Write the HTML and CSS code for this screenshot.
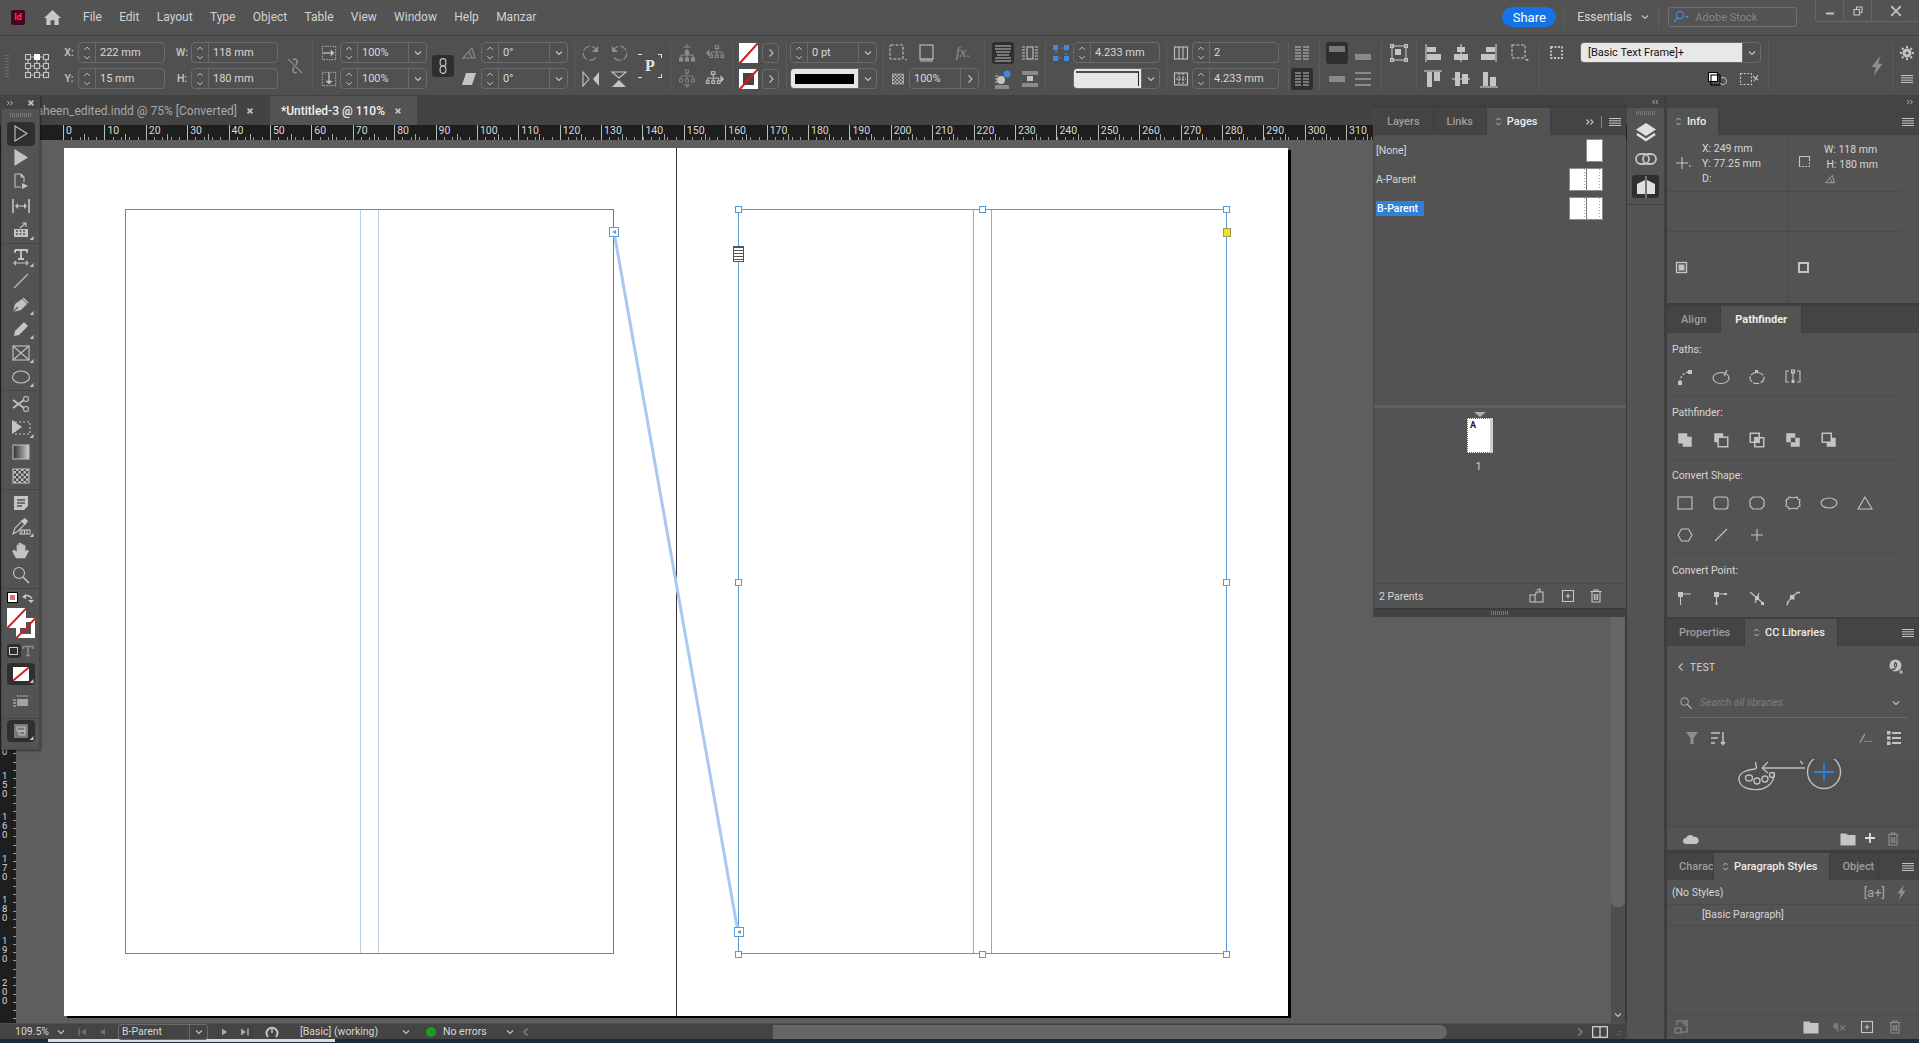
FILE: index.html
```html
<!DOCTYPE html>
<html lang="en">
<head>
    <meta charset="UTF-8">
    <title>Adobe InDesign - Untitled-3</title>
    <link rel="stylesheet" href="styles.css">
</head>
<body>
    <!-- icon sprite -->
    <svg class="sprite" xmlns="http://www.w3.org/2000/svg">
        <defs>
            <linearGradient id="gr"><stop offset="0" stop-color="#2e2e2e"/><stop offset="1" stop-color="#d0d0d0"/></linearGradient>
            <pattern id="chk" width="5" height="5" patternUnits="userSpaceOnUse"><rect width="5" height="5" fill="#bcbcbc"/><rect width="2.500" height="2.500" fill="#444"/><rect x="2.500" y="2.500" width="2.500" height="2.500" fill="#444"/></pattern>
        </defs>
        <symbol id="chev" viewBox="0 0 10 10"><path d="M2 3.500 5 6.500 8 3.500"/></symbol>
        <symbol id="chev-up" viewBox="0 0 10 10"><path d="M2 6.500 5 3.500 8 6.500"/></symbol>
        <symbol id="chev-r" viewBox="0 0 10 10"><path d="M3.500 1.500 7 5 3.500 8.500"/></symbol>
        <symbol id="chev-l" viewBox="0 0 10 10"><path d="M6.500 1.500 3 5 6.500 8.500"/></symbol>
        <symbol id="dbl-r" viewBox="0 0 10 10"><path d="M1.500 2.500 4 5 1.500 7.500M5.500 2.500 8 5 5.500 7.500"/></symbol>
        <symbol id="dbl-l" viewBox="0 0 10 10"><path d="M4.500 2.500 2 5 4.500 7.500M8.500 2.500 6 5 8.500 7.500"/></symbol>
        <symbol id="close" viewBox="0 0 10 10"><path d="M2 2 8 8M8 2 2 8" stroke-width="2"/></symbol>
        <symbol id="menu" viewBox="0 0 14 10"><path d="M1 1.500h12M1 3.800h12M1 6.200h12M1 8.500h12" stroke-width="1"/></symbol>
        <symbol id="sort" viewBox="0 0 8 12"><path d="M1.500 4.500 4 2l2.500 2.500M1.500 7.500 4 10l2.500-2.500"/></symbol>
        <symbol id="trash" viewBox="0 0 14 14"><path d="M1.500 2.500h11M5 2.500V1h4v1.500M3 3v10h8V3M5.300 5v6M7 5v6M8.700 5v6"/></symbol>
        <symbol id="newpage" viewBox="0 0 14 14"><rect x="1.500" y="1.500" width="11" height="11"/><path d="M7 4.500v5M4.500 7h5"/></symbol>
        <symbol id="folder" viewBox="0 0 16 14"><path d="M1 2h5l1.500 1.500H15V13H1z" fill="currentColor"/></symbol>
        <symbol id="bolt" viewBox="0 0 12 18"><path d="M9 0 1 10h4L3 18l8-11H7z" fill="currentColor" stroke="none"/></symbol>

        <symbol id="t-sel" viewBox="0 0 20 20"><path d="M4 2v15l12-7.500z"/></symbol>
        <symbol id="t-dsel" viewBox="0 0 20 20"><path d="M4 2v15l12-7.500z" fill="currentColor"/></symbol>
        <symbol id="t-page" viewBox="0 0 20 20"><path d="M4 2h6l3 3v5M4 2v13h6M13 5h-3V2"/><path d="M11 11v6l6-3z" fill="currentColor" stroke="none"/></symbol>
        <symbol id="t-gap" viewBox="0 0 20 20"><path d="M2 3v14M18 3v14" stroke-width="1.600"/><path d="M5 10h10"/><path d="M4 10l3-3v6zM16 10l-3-3v6z" fill="currentColor" stroke="none"/></symbol>
        <symbol id="t-content" viewBox="0 0 20 20"><path d="M3 9h14v8H3z" fill="currentColor" stroke="none"/><path d="M5 11h2M8.500 11h2M12 11h2M5 14h2M8.500 14h2M12 14h2" stroke="#535353" stroke-width="1.600"/><path d="M9 8l6-5M11 3h4v4"/></symbol>
        <symbol id="t-type" viewBox="0 0 20 20"><path d="M4 3h12v3M4 3v3M10 3v9M7 12h6" stroke-width="1.800"/><path d="M3 16h14M5 14l-2 2 2 2M15 14l2 2-2 2"/></symbol>
        <symbol id="t-line" viewBox="0 0 20 20"><path d="M3 17 17 3"/></symbol>
        <symbol id="t-pen" viewBox="0 0 20 20"><path d="M2 17 4 9l7-5 5 5-6 6z" fill="currentColor" stroke="none"/><path d="M2 17l5-5" stroke="#535353"/><path d="M12 3l5 5" stroke-width="1.500"/></symbol>
        <symbol id="t-pencil" viewBox="0 0 20 20"><path d="M3 17l1-5L13 3l4 4-9 9z" fill="currentColor" stroke="none"/></symbol>
        <symbol id="t-frame" viewBox="0 0 20 20"><rect x="2" y="3" width="16" height="14"/><path d="M2 3l16 14M18 3 2 17"/></symbol>
        <symbol id="t-ellipse" viewBox="0 0 20 20"><ellipse cx="10" cy="10" rx="8.500" ry="6"/></symbol>
        <symbol id="t-scissors" viewBox="0 0 20 20"><circle cx="15" cy="5" r="2.500"/><circle cx="15" cy="15" r="2.500"/><path d="M13 6 2 14M13 14 2 6" stroke-width="1.600"/></symbol>
        <symbol id="t-free" viewBox="0 0 20 20"><rect x="4" y="4" width="15" height="12" stroke-dasharray="2 2"/><path d="M1 2v14l10-7z" fill="currentColor" stroke="none"/></symbol>
        <symbol id="t-grad" viewBox="0 0 20 20"><rect x="2" y="3" width="16" height="14" fill="url(#gr)" stroke="#bbb"/></symbol>
        <symbol id="t-check" viewBox="0 0 20 20"><rect x="2" y="3" width="16" height="14" fill="url(#chk)" stroke="#bbb"/></symbol>
        <symbol id="t-note" viewBox="0 0 20 20"><path d="M3 3h14v10l-4 4H3z" fill="currentColor" stroke="none"/><path d="M6 7h8M6 10h8M6 13h5" stroke="#535353" stroke-width="1.300"/></symbol>
        <symbol id="t-drop" viewBox="0 0 20 20"><path d="M2 17l2-6 7-7 3 3-7 7z"/><path d="M11 3l3-2 3 3-2 3-1 1-4-4z" fill="currentColor" stroke="none"/><rect x="9" y="13" width="10" height="4"/><path d="M11 13v4M13.500 13v4M16 13v4"/></symbol>
        <symbol id="t-hand" viewBox="0 0 20 20"><path d="M5 17 1.500 10l1.500-1L6 11V4h1.500L8 9V2h1.800L10.500 9V3H12l.5 6V4.500h1.600V11l2-2 1.400 1L14 17z" fill="currentColor" stroke="currentColor" stroke-width=".6"/></symbol>
        <symbol id="t-zoom" viewBox="0 0 20 20"><circle cx="8" cy="8" r="5.500"/><path d="M12 12l6 6" stroke-width="1.600"/></symbol>
        <symbol id="swap" viewBox="0 0 14 14"><path d="M3 5a6 6 0 0 1 8 3" stroke-width="1.500"/><path d="M1 6l4-3v5zM10 12l-3-3h6z" fill="currentColor" stroke="none"/></symbol>
        <symbol id="t-t" viewBox="0 0 14 14"><path d="M2 2.500h10v2.500M2 2.500v2.500M7 2.500v9M5 11.500h4" stroke-width="1.500"/></symbol>
        <symbol id="t-screen" viewBox="0 0 20 20"><rect x="3" y="3" width="14" height="14" fill="currentColor" stroke="none" opacity=".5"/><path d="M6 6h8v4H6zM8 10h6v4H8z" stroke-width="1"/></symbol>
        <symbol id="t-format" viewBox="0 0 20 20"><path d="M6 8h11v7H6z" fill="currentColor" stroke="none"/><path d="M2 9h3M2 12h3M2 15h3M7 6V4M10 6V4M13 6V4M16 6V4" stroke-width="1.400"/></symbol>

        <symbol id="c-ref" viewBox="0 0 26 26"><path d="M4 4h18M4 13h18M4 22h18M4 4v18M13 4v18M22 4v18"/><g fill="#505050"><rect x="1.500" y="1.500" width="5" height="5"/><rect x="19.500" y="1.500" width="5" height="5"/><rect x="1.500" y="10.500" width="5" height="5"/><rect x="10.500" y="10.500" width="5" height="5"/><rect x="19.500" y="10.500" width="5" height="5"/><rect x="1.500" y="19.500" width="5" height="5"/><rect x="10.500" y="19.500" width="5" height="5"/><rect x="19.500" y="19.500" width="5" height="5"/></g><rect x="10" y="1" width="6" height="6" fill="#fff" stroke="none"/></symbol>
        <symbol id="c-link" viewBox="0 0 20 20"><path d="M8 4c2-2 5 0 4 3l-1 2M12 16c-2 2-5 0-4-3l1-2" stroke-width="1.600"/><path d="M3 3l14 14"/></symbol>
        <symbol id="c-link2" viewBox="0 0 14 22"><rect x="3.500" y="2" width="7" height="9" rx="3.500" stroke-width="1.400"/><rect x="3.500" y="11" width="7" height="9" rx="3.500" stroke-width="1.400"/></symbol>
        <symbol id="c-sx" viewBox="0 0 18 18"><rect x="1.500" y="1.500" width="15" height="15" stroke-dasharray="1.500 1.500"/><path d="M2 9h11" stroke-width="1.400"/><path d="M15 9l-4-4v8z" fill="currentColor" stroke="none"/></symbol>
        <symbol id="c-sy" viewBox="0 0 18 18"><rect x="1.500" y="1.500" width="15" height="15" stroke-dasharray="1.500 1.500"/><path d="M9 2v11" stroke-width="1.400"/><path d="M9 15l-4-4h8z" fill="currentColor" stroke="none"/></symbol>
        <symbol id="c-angle" viewBox="0 0 16 16"><path d="M2 13h12L11 3z"/><path d="M8 7l3 6"/></symbol>
        <symbol id="c-shear" viewBox="0 0 16 16"><path d="M5 2h10l-4 12H1z" fill="currentColor" stroke="none"/></symbol>
        <symbol id="c-rot" viewBox="0 0 20 20"><path d="M16 9a7 7 0 1 0-1 5" stroke-dasharray="8 2"/><path d="M17 3v6h-6z" fill="currentColor" stroke="none"/></symbol>
        <symbol id="c-rotb" viewBox="0 0 20 20"><path d="M4 9a7 7 0 1 1 1 5" stroke-dasharray="8 2"/><path d="M3 3v6h6z" fill="currentColor" stroke="none"/></symbol>
        <symbol id="c-fliph" viewBox="0 0 20 20"><path d="M2 3l6 7-6 7z"/><path d="M18 3l-6 7 6 7z" fill="currentColor" stroke="none"/></symbol>
        <symbol id="c-flipv" viewBox="0 0 20 20"><path d="M3 3h14l-7 6z"/><path d="M3 18h14l-7-7z" fill="currentColor" stroke="none"/></symbol>
        <symbol id="c-tree" viewBox="0 0 20 20"><path d="M10 1 6 5h8z" fill="currentColor" stroke="none" opacity=".6"/><path d="M10 6v6M4 12h12M4 12v3M10 12v3M16 12v3"/><g fill="currentColor"><rect x="8.500" y="8" width="3" height="3"/><rect x="2.500" y="15" width="3" height="3"/><rect x="8.500" y="15" width="3" height="3"/><rect x="14.500" y="15" width="3" height="3"/></g></symbol>
        <symbol id="c-tree2" viewBox="0 0 22 20"><path d="M1 10l4-4v8z" fill="currentColor" stroke="none"/><path d="M13 4v4M7 9h12M7 9v3M13 9v3M19 9v3"/><g fill="none"><rect x="11" y="2" width="4" height="3"/><rect x="5.500" y="12" width="3" height="3"/><rect x="11.500" y="12" width="3" height="3"/><rect x="17.500" y="12" width="3" height="3"/></g></symbol>
        <symbol id="c-tree3" viewBox="0 0 20 20"><path d="M10 19l-4-4h8z" fill="currentColor" stroke="none" opacity=".6"/><path d="M10 3v4M4 7h12M4 7v3M10 7v3M16 7v3" opacity=".7"/><g fill="none" opacity=".7"><rect x="8.500" y="1" width="3" height="3"/><rect x="2.500" y="10" width="3" height="3"/><rect x="8.500" y="10" width="3" height="3"/><rect x="14.500" y="10" width="3" height="3"/></g></symbol>
        <symbol id="c-tree4" viewBox="0 0 22 20"><path d="M21 10l-4-4v8z" fill="currentColor" stroke="none"/><path d="M9 4v4M3 9h12M3 9v3M9 9v3M15 9v3"/><g fill="none"><rect x="7" y="2" width="4" height="3"/><rect x="1.500" y="12" width="3" height="3"/><rect x="7.500" y="12" width="3" height="3"/><rect x="13.500" y="12" width="3" height="3"/></g></symbol>
        <symbol id="c-fframe" viewBox="0 0 20 20"><rect x="2" y="2" width="13" height="14" rx="1" stroke-dasharray="3 1.500"/><path d="M17 16l2 0-1 1.500z" fill="currentColor" stroke="none"/></symbol>
        <symbol id="c-shadow" viewBox="0 0 20 20"><rect x="3" y="2" width="13" height="14"/><rect x="3" y="16" width="13" height="3" fill="currentColor" stroke="none" opacity=".5"/></symbol>
        <symbol id="c-wrap1" viewBox="0 0 20 20"><path d="M2 3h16M2 6h16M2 15h16M2 18h16M3 9h14M4 12h12" stroke-width="1.100"/></symbol>
        <symbol id="c-wrap2" viewBox="0 0 20 20"><rect x="7" y="4" width="6" height="12"/><path d="M2 4h3M2 7h3M2 10h3M2 13h3M2 16h3M15 4h3M15 7h3M15 10h3M15 13h3M15 16h3"/></symbol>
        <symbol id="c-wrap3" viewBox="0 0 20 20"><ellipse cx="8" cy="11" rx="4" ry="4" fill="currentColor" stroke="none"/><circle cx="14" cy="5" r="3.500" fill="#3f8be0" stroke="none"/><path d="M2 17h14M2 19h14M2 7h3M2 10h2M2 13h2"/></symbol>
        <symbol id="c-wrap4" viewBox="0 0 20 20"><rect x="7" y="7" width="6" height="5" fill="currentColor" stroke="none"/><path d="M2 3h16M2 5h16M2 15h16M2 17h16"/></symbol>
        <symbol id="c-auto" viewBox="0 0 16 16"><path d="M3 3h10v10H3z" stroke="#4a90e2" stroke-dasharray="2 3"/><g fill="#3f8be0" stroke="none"><rect x="0" y="0" width="5" height="5"/><rect x="11" y="0" width="5" height="5"/><rect x="0" y="11" width="5" height="5"/><rect x="11" y="11" width="5" height="5"/></g></symbol>
        <symbol id="c-cols" viewBox="0 0 16 16"><rect x="1.500" y="2" width="13" height="12"/><path d="M6 2v12M10 2v12"/></symbol>
        <symbol id="c-gut" viewBox="0 0 16 16"><rect x="1.500" y="2" width="13" height="12"/><path d="M6 2v12M10 2v12M3 8h10" stroke-dasharray="2 1"/></symbol>
        <symbol id="c-list1" viewBox="0 0 18 16"><path d="M2 2h6M2 5h6M2 8h6M2 11h6M2 14h6M10 2h6M10 5h6M10 8h6M10 11h6M10 14h6" stroke-width="1"/></symbol>
        <symbol id="c-lines" viewBox="0 0 18 16"><path d="M1 2h16M1 4h16M1 6h16" stroke-width="1"/></symbol>
        <symbol id="c-linesb" viewBox="0 0 18 16"><path d="M1 10h16M1 12h16M1 14h16" stroke-width="1"/></symbol>
        <symbol id="c-linesm" viewBox="0 0 18 16"><path d="M1 6h16M1 8h16M1 10h16" stroke-width="1"/></symbol>
        <symbol id="c-liness" viewBox="0 0 18 16"><path d="M1 2h16M1 8h16M1 14h16" stroke-width="1"/></symbol>
        <symbol id="c-fit" viewBox="0 0 20 20"><rect x="3" y="3" width="14" height="14"/><rect x="1.500" y="1.500" width="3" height="3"/><rect x="15.500" y="1.500" width="3" height="3"/><rect x="1.500" y="15.500" width="3" height="3"/><rect x="15.500" y="15.500" width="3" height="3"/><rect x="6" y="6" width="6" height="6" fill="currentColor" stroke="none"/></symbol>
        <symbol id="a-l" viewBox="0 0 18 20"><path d="M2 1v18" stroke-width="1.200"/><rect x="3" y="4" width="9" height="5" fill="currentColor" stroke="none"/><rect x="3" y="11" width="14" height="6" fill="currentColor" stroke="none"/></symbol>
        <symbol id="a-c" viewBox="0 0 18 20"><path d="M9 1v18" stroke-width="1.200"/><rect x="5" y="4" width="8" height="5" fill="currentColor" stroke="none"/><rect x="2" y="11" width="14" height="6" fill="currentColor" stroke="none"/></symbol>
        <symbol id="a-r" viewBox="0 0 18 20"><path d="M16 1v18" stroke-width="1.200"/><rect x="6" y="4" width="9" height="5" fill="currentColor" stroke="none"/><rect x="1" y="11" width="14" height="6" fill="currentColor" stroke="none"/></symbol>
        <symbol id="a-t" viewBox="0 0 20 20"><path d="M1 2h18" stroke-width="1.200"/><rect x="4" y="3" width="5" height="15" fill="currentColor" stroke="none"/><rect x="11" y="3" width="6" height="9" fill="currentColor" stroke="none"/></symbol>
        <symbol id="a-m" viewBox="0 0 20 20"><path d="M1 10h18" stroke-width="1.200"/><rect x="4" y="3" width="5" height="14" fill="currentColor" stroke="none"/><rect x="11" y="5" width="6" height="10" fill="currentColor" stroke="none"/></symbol>
        <symbol id="a-b" viewBox="0 0 20 20"><path d="M1 18h18" stroke-width="1.200"/><rect x="4" y="3" width="5" height="14" fill="currentColor" stroke="none"/><rect x="11" y="8" width="6" height="9" fill="currentColor" stroke="none"/></symbol>
        <symbol id="a-box" viewBox="0 0 20 20"><rect x="2" y="2" width="13" height="13" stroke-dasharray="3 1.500"/><path d="M15 16h4l-2 2z" fill="currentColor" stroke="none"/></symbol>
        <symbol id="c-grid" viewBox="0 0 16 16"><rect x="2" y="2" width="11" height="11" stroke-dasharray="2 1.500" stroke-width="1.800"/></symbol>
        <symbol id="c-styled" viewBox="0 0 20 16"><rect x="1.500" y="1.500" width="9" height="9" fill="#fff" stroke="#000"/><rect x="4" y="4" width="9" height="10" fill="none" stroke="#000"/><path d="M14 7a3.500 3.500 0 1 1-1 5" stroke="#aaa"/></symbol>
        <symbol id="c-clear" viewBox="0 0 20 16"><rect x="1.500" y="2.500" width="11" height="11" stroke-dasharray="2 1.500"/><path d="M15 10l4-6M14 5l5 4" stroke-width="1.100"/></symbol>
        <symbol id="dock-layers" viewBox="0 0 24 24"><path d="M12 3 22 9.500 12 16 2 9.500z" fill="currentColor" stroke="none"/><path d="M3 14l9 6 9-6" stroke-width="2.600"/></symbol>
        <symbol id="dock-links" viewBox="0 0 24 24"><rect x="2" y="7" width="13" height="10" rx="5" stroke-width="1.800"/><rect x="9" y="7" width="13" height="10" rx="5" stroke-width="1.800"/></symbol>
        <symbol id="dock-pages" viewBox="0 0 24 24"><path d="M11 5 3 9v10h8zM13 5l8 4v10h-8z" fill="currentColor" stroke="none"/><path d="M12 1v22" stroke-width=".8"/></symbol>
        <symbol id="i-cross" viewBox="0 0 16 16"><path d="M1 8h12M7 2v12"/><path d="M14 11h1.500" stroke-width="1.500"/></symbol>
        <symbol id="i-box" viewBox="0 0 16 16"><rect x="2.500" y="1.500" width="10" height="10" stroke-dasharray="2 1.200"/><path d="M2.500 1.500h10v3M2.500 1.500v10"/></symbol>
        <symbol id="i-fill" viewBox="0 0 14 14"><rect x="1.500" y="1.500" width="10" height="10" stroke-width="1.400"/><rect x="3.500" y="3.500" width="6" height="6" fill="currentColor" stroke="none"/></symbol>
        <symbol id="i-stroke" viewBox="0 0 14 14"><rect x="2" y="2" width="9" height="9" stroke-width="2"/></symbol>
        <symbol id="p-join" viewBox="0 0 18 18"><path d="M4 14C4 9 7 5 12 4" stroke-dasharray="2 2" stroke-width="1.400"/><rect x="2" y="13" width="4" height="4" fill="currentColor" stroke="none"/><rect x="12" y="2" width="4" height="4" fill="currentColor" stroke="none"/></symbol>
        <symbol id="p-open" viewBox="0 0 18 18"><ellipse cx="9" cy="10" rx="8" ry="5.500"/><path d="M12 8l3-6"/></symbol>
        <symbol id="p-close" viewBox="0 0 18 18"><ellipse cx="9" cy="10" rx="7" ry="5.500" stroke-dasharray="6 1.500"/><rect x="7" y="2" width="3" height="3" fill="currentColor" stroke="none"/></symbol>
        <symbol id="p-rev" viewBox="0 0 18 18"><path d="M5 3H2v11h3M13 3h3v11h-3M9 3v12"/><rect x="7.500" y="12" width="3" height="3" fill="currentColor" stroke="none"/><rect x="7.500" y="2" width="3" height="3"/></symbol>
        <symbol id="f-add" viewBox="0 0 16 16"><path d="M2 2h8v3h4v9H6v-3H2z" fill="currentColor" stroke="none"/></symbol>
        <symbol id="f-sub" viewBox="0 0 16 16"><rect x="2" y="2" width="8" height="8" fill="currentColor" stroke="none"/><rect x="5.500" y="5.500" width="8.500" height="8.500" fill="#535353" stroke-width="1.300"/></symbol>
        <symbol id="f-int" viewBox="0 0 16 16"><rect x="2" y="2" width="8" height="8" stroke-width="1.300"/><rect x="6" y="6" width="8" height="8" stroke-width="1.300"/><rect x="6" y="6" width="4" height="4" fill="currentColor" stroke="none"/></symbol>
        <symbol id="f-exc" viewBox="0 0 16 16"><rect x="2" y="2" width="8" height="8" fill="currentColor" stroke="none"/><rect x="6" y="6" width="8" height="8" fill="currentColor" stroke="none"/><rect x="6" y="6" width="4" height="4" fill="#535353" stroke="none"/></symbol>
        <symbol id="f-back" viewBox="0 0 16 16"><rect x="6" y="6" width="8" height="8" fill="currentColor" stroke="none"/><rect x="2" y="2" width="8" height="8" fill="#535353" stroke-width="1.300"/></symbol>
        <symbol id="s-rect" viewBox="0 0 18 18"><rect x="2" y="3" width="14" height="12"/></symbol>
        <symbol id="s-round" viewBox="0 0 18 18"><rect x="2" y="3" width="14" height="12" rx="3"/></symbol>
        <symbol id="s-bevel" viewBox="0 0 18 18"><path d="M5 3h8l3 3v6l-3 3H5l-3-3V6z"/></symbol>
        <symbol id="s-inv" viewBox="0 0 18 18"><path d="M5 3q4 1.500 8 0 0 2 3 3-1 3 0 6-3 1-3 3-4-1.500-8 0 0-2-3-3 1-3 0-6 3-1 3-3z"/></symbol>
        <symbol id="s-ell" viewBox="0 0 18 18"><ellipse cx="9" cy="9" rx="8" ry="5"/></symbol>
        <symbol id="s-tri" viewBox="0 0 18 18"><path d="M9 3l7 12H2z"/></symbol>
        <symbol id="s-hex" viewBox="0 0 18 18"><path d="M5.500 3h7L16 9l-3.500 6h-7L2 9z"/></symbol>
        <symbol id="s-line" viewBox="0 0 18 18"><path d="M3 15 15 3"/></symbol>
        <symbol id="s-plus" viewBox="0 0 18 18"><path d="M9 3v12M3 9h12"/></symbol>
        <symbol id="pt-a" viewBox="0 0 18 18"><rect x="2" y="3" width="5" height="5" fill="currentColor" stroke="none"/><path d="M7 5h8M4.500 8v8"/></symbol>
        <symbol id="pt-b" viewBox="0 0 18 18"><rect x="2" y="3" width="5" height="5" fill="currentColor" stroke="none"/><path d="M7 5h8M4.500 8v8"/><rect x="12" y="4" width="3" height="2" fill="currentColor" stroke="none"/><rect x="3.500" y="13" width="2" height="3" fill="currentColor" stroke="none"/></symbol>
        <symbol id="pt-c" viewBox="0 0 18 18"><path d="M2 3l14 12M11 4 7 14"/><rect x="7" y="7" width="4" height="4" fill="currentColor" stroke="none"/><rect x="13" y="13" width="3" height="3" fill="currentColor" stroke="none"/></symbol>
        <symbol id="pt-d" viewBox="0 0 18 18"><path d="M3 16C5 10 10 5 16 3"/><rect x="6" y="6" width="4.500" height="4.500" fill="currentColor" stroke="none"/><path d="M12 3l4 1M4 12l-1 4"/></symbol>
    </svg>

    <header class="menubar">
        <div class="app-logo">Id</div>
        <svg class="home" viewBox="0 0 20 18"><path d="M10 1 1 9.500h2.500V17H8v-5h4v5h4.500V9.500H19z"/></svg>
        <nav class="menu">
            <span>File</span><span>Edit</span><span>Layout</span><span>Type</span><span>Object</span>
            <span>Table</span><span>View</span><span>Window</span><span>Help</span><span>Manzar</span>
        </nav>
        <button class="share">Share</button>
        <i class="vsep"></i>
        <div class="workspace-name">Essentials <svg class="ic s10"><use href="#chev"/></svg></div>
        <i class="vsep"></i>
        <div class="stock">
            <svg class="stock-ic" viewBox="0 0 18 14"><circle cx="8" cy="5" r="3.600"/><path d="M5.500 8 2 12"/><path d="M13 6h4l-2 2.500z" fill="#3f8be0" stroke="none"/></svg>
            <span>Adobe Stock</span>
        </div>
        <div class="winctl">
            <span><svg class="ic s10" viewBox="0 0 10 10"><path d="M1 7.500h8" stroke-width="2"/></svg></span>
            <span><svg class="ic s10" viewBox="0 0 10 10"><rect x="1" y="3.500" width="5.500" height="5.500"/><path d="M3.500 3.500V1H9v5.500H6.500"/></svg></span>
            <span><svg class="ic s12" viewBox="0 0 10 10"><path d="M1 1l8 8M9 1 1 9" stroke-width="1.400"/></svg></span>
        </div>
    </header>

    <div class="controlbar">
        <!-- first row -->
        <i class="grip-v span2"></i>
        <svg class="ic s26 span2"><use href="#c-ref"/></svg>
        <label>X:</label>
        <div class="field"><span class="spin"><svg class="ic s8"><use href="#chev-up"/></svg><svg class="ic s8"><use href="#chev"/></svg></span><span class="val">222 mm</span></div>
        <label>W:</label>
        <div class="field"><span class="spin"><svg class="ic s8"><use href="#chev-up"/></svg><svg class="ic s8"><use href="#chev"/></svg></span><span class="val">118 mm</span></div>
        <svg class="ic s20 span2 dim"><use href="#c-link"/></svg>
        <i class="sep span2"></i>
        <svg class="ic s16"><use href="#c-sx"/></svg>
        <div class="field"><span class="spin"><svg class="ic s8"><use href="#chev-up"/></svg><svg class="ic s8"><use href="#chev"/></svg></span><span class="val">100%</span><span class="drop"><svg class="ic s10"><use href="#chev"/></svg></span></div>
        <span class="dark-btn span2"><svg class="ic h18"><use href="#c-link2"/></svg></span>
        <svg class="ic s16 dim"><use href="#c-angle"/></svg>
        <div class="field"><span class="spin"><svg class="ic s8"><use href="#chev-up"/></svg><svg class="ic s8"><use href="#chev"/></svg></span><span class="val">0°</span><span class="drop"><svg class="ic s10"><use href="#chev"/></svg></span></div>
        <i class="sep span2"></i>
        <svg class="ic s20 dim"><use href="#c-rot"/></svg>
        <svg class="ic s20 dim"><use href="#c-rotb"/></svg>
        <div class="p-box span2">P</div>
        <i class="sep span2"></i>
        <svg class="ic s20 dim"><use href="#c-tree"/></svg>
        <svg class="ic s20 dim"><use href="#c-tree2"/></svg>
        <i class="sep span2"></i>
        <span class="swatch none"></span>
        <span class="arrow-btn"><svg class="ic s10"><use href="#chev-r"/></svg></span>
        <i class="sep span2"></i>
        <div class="field"><span class="spin"><svg class="ic s8"><use href="#chev-up"/></svg><svg class="ic s8"><use href="#chev"/></svg></span><span class="val">0 pt</span><span class="drop"><svg class="ic s10"><use href="#chev"/></svg></span></div>
        <i class="sep span2"></i>
        <svg class="ic s20"><use href="#c-fframe"/></svg>
        <svg class="ic s20"><use href="#c-shadow"/></svg>
        <span class="fx">fx.</span>
        <i class="sep span2"></i>
        <span class="dark-btn"><svg class="ic s20"><use href="#c-wrap1"/></svg></span>
        <svg class="ic s20"><use href="#c-wrap2"/></svg>
        <i class="sep span2"></i>
        <svg class="ic s16"><use href="#c-auto"/></svg>
        <div class="field"><span class="spin"><svg class="ic s8"><use href="#chev-up"/></svg><svg class="ic s8"><use href="#chev"/></svg></span><span class="val">4.233 mm</span></div>
        <i class="sep span2"></i>
        <svg class="ic s16"><use href="#c-cols"/></svg>
        <div class="field"><span class="spin"><svg class="ic s8"><use href="#chev-up"/></svg><svg class="ic s8"><use href="#chev"/></svg></span><span class="val">2</span></div>
        <i class="sep span2"></i>
        <svg class="ic s18"><use href="#c-list1"/></svg>
        <i class="sep span2"></i>
        <span class="dark-btn"><svg class="ic s18"><use href="#c-lines"/></svg></span>
        <svg class="ic s18"><use href="#c-linesb"/></svg>
        <i class="sep span2"></i>
        <svg class="ic s20"><use href="#c-fit"/></svg>
        <i class="sep span2"></i>
        <svg class="ic s20"><use href="#a-l"/></svg>
        <svg class="ic s20"><use href="#a-c"/></svg>
        <svg class="ic s20"><use href="#a-r"/></svg>
        <svg class="ic s20"><use href="#a-box"/></svg>
        <i class="sep span2"></i>
        <svg class="ic s16"><use href="#c-grid"/></svg>
        <div class="field style-field"><span class="white-val">[Basic Text Frame]+</span><span class="drop"><svg class="ic s10"><use href="#chev"/></svg></span></div>
        <i class="sep span2"></i>
        <svg class="ic bolt-ic span2 dim"><use href="#bolt"/></svg>
        <i class="sep span2"></i>
        <svg class="ic s14" viewBox="0 0 14 14"><circle cx="7" cy="7" r="3" stroke-width="3"/><path d="M7 0v2M7 12v2M0 7h2M12 7h2M2 2l1.500 1.500M10.500 10.500 12 12M2 12l1.500-1.500M10.500 3.500 12 2" stroke-width="2"/></svg>

        <!-- second row -->
        <label>Y:</label>
        <div class="field"><span class="spin"><svg class="ic s8"><use href="#chev-up"/></svg><svg class="ic s8"><use href="#chev"/></svg></span><span class="val">15 mm</span></div>
        <label>H:</label>
        <div class="field"><span class="spin"><svg class="ic s8"><use href="#chev-up"/></svg><svg class="ic s8"><use href="#chev"/></svg></span><span class="val">180 mm</span></div>
        <svg class="ic s16"><use href="#c-sy"/></svg>
        <div class="field"><span class="spin"><svg class="ic s8"><use href="#chev-up"/></svg><svg class="ic s8"><use href="#chev"/></svg></span><span class="val">100%</span><span class="drop"><svg class="ic s10"><use href="#chev"/></svg></span></div>
        <svg class="ic s16"><use href="#c-shear"/></svg>
        <div class="field"><span class="spin"><svg class="ic s8"><use href="#chev-up"/></svg><svg class="ic s8"><use href="#chev"/></svg></span><span class="val">0°</span><span class="drop"><svg class="ic s10"><use href="#chev"/></svg></span></div>
        <svg class="ic s20"><use href="#c-fliph"/></svg>
        <svg class="ic s20"><use href="#c-flipv"/></svg>
        <svg class="ic s20 dim"><use href="#c-tree3"/></svg>
        <svg class="ic s20"><use href="#c-tree4"/></svg>
        <span class="swatch stroke"></span>
        <span class="arrow-btn"><svg class="ic s10"><use href="#chev-r"/></svg></span>
        <div class="field"><span class="stroke-preview"><i></i></span><span class="drop"><svg class="ic s10"><use href="#chev"/></svg></span></div>
        <svg class="ic s14"><use href="#t-check"/></svg>
        <div class="field opacity-field span-col2"><span class="val">100%</span><span class="drop"><svg class="ic s10"><use href="#chev-r"/></svg></span></div>
        <svg class="ic s20"><use href="#c-wrap3"/></svg>
        <svg class="ic s20"><use href="#c-wrap4"/></svg>
        <i></i>
        <div class="field"><span class="frame-preview"><i></i></span><span class="drop"><svg class="ic s10"><use href="#chev"/></svg></span></div>
        <svg class="ic s16"><use href="#c-gut"/></svg>
        <div class="field"><span class="spin"><svg class="ic s8"><use href="#chev-up"/></svg><svg class="ic s8"><use href="#chev"/></svg></span><span class="val">4.233 mm</span></div>
        <span class="dark-btn"><svg class="ic s18"><use href="#c-list1"/></svg></span>
        <svg class="ic s18"><use href="#c-linesm"/></svg>
        <svg class="ic s18"><use href="#c-liness"/></svg>
        <i></i>
        <svg class="ic s20"><use href="#a-t"/></svg>
        <svg class="ic s20"><use href="#a-m"/></svg>
        <svg class="ic s20"><use href="#a-b"/></svg>
        <i></i>
        <i></i>
        <div class="style-actions"><svg class="ic w20"><use href="#c-styled"/></svg><svg class="ic w20"><use href="#c-clear"/></svg></div>
        <svg class="ic s14"><use href="#menu"/></svg>
    </div>

    <div class="workspace">
        <div class="doc">
            <div class="doc-tabs">
                <div class="doc-tab"><span>Shaheen_edited.indd @ 75% [Converted]</span><svg class="ic s8"><use href="#close"/></svg></div>
                <div class="doc-tab active"><span>*Untitled-3 @ 110%</span><svg class="ic s8"><use href="#close"/></svg></div>
            </div>
            <div class="ruler-h">
                <span>0</span><span>10</span><span>20</span><span>30</span><span>40</span><span>50</span><span>60</span><span>70</span>
                <span>80</span><span>90</span><span>100</span><span>110</span><span>120</span><span>130</span><span>140</span><span>150</span>
                <span>160</span><span>170</span><span>180</span><span>190</span><span>200</span><span>210</span><span>220</span><span>230</span>
                <span>240</span><span>250</span><span>260</span><span>270</span><span>280</span><span>290</span><span>300</span><span>310</span>
            </div>
            <div class="doc-body">
                <div class="ruler-v">
                    <span>0</span><span>10</span><span>20</span><span>30</span><span>40</span><span>50</span><span>60</span><span>70</span>
                    <span>80</span><span>90</span><span>100</span><span>110</span><span>120</span><span>130</span><span>140</span><span>150</span>
                    <span>160</span><span>170</span><span>180</span><span>190</span><span>200</span>
                </div>
                <div class="canvas">
                    <div class="sheet">
                        <i class="spine"></i>
                        <div class="parent-box"><i class="guide g1"></i><i class="guide g2"></i></div>
                        <div class="text-frame"><i class="guide g1"></i><i class="guide g2"></i></div>
                        <svg class="thread" viewBox="0 0 1224 868"><path d="M550 84 674 784"/></svg>
                        <i class="port out"></i>
                        <i class="h tl"></i><i class="h tc"></i><i class="h tr"></i>
                        <i class="h ml"></i><i class="h mr"></i>
                        <i class="h bl"></i><i class="h bc"></i><i class="h br"></i>
                        <i class="port in"></i>
                        <i class="port yellow"></i>
                        <i class="load-cursor"></i>
                    </div>
                </div>
                <div class="vscroll">
                    <div class="vthumb"></div>
                    <svg class="ic s10"><use href="#chev"/></svg>
                </div>
            </div>
            <div class="statusbar">
                <span class="zoom">109.5%</span><svg class="ic s10"><use href="#chev"/></svg>
                <svg class="ic s10 nav" viewBox="0 0 10 10"><path d="M2 1.500v7" stroke-width="1.500"/><path d="M9 1.500v7L4 5z" fill="currentColor" stroke="none"/></svg>
                <svg class="ic s10 nav" viewBox="0 0 10 10"><path d="M7 1.500v7L2 5z" fill="currentColor" stroke="none"/></svg>
                <div class="page-select"><span>B-Parent</span><span class="drop"><svg class="ic s10"><use href="#chev"/></svg></span></div>
                <svg class="ic s10 nav2" viewBox="0 0 10 10"><path d="M3 1.500v7L8 5z" fill="currentColor" stroke="none"/></svg>
                <svg class="ic s10 nav2" viewBox="0 0 10 10"><path d="M8 1.500v7" stroke-width="1.500"/><path d="M1 1.500v7L6 5z" fill="currentColor" stroke="none"/></svg>
                <svg class="ic s14 timer" viewBox="0 0 14 14"><path d="M3 12A5.500 5.500 0 1 1 11 12" stroke-width="2"/><path d="M7 3v5" stroke-width="1.500"/></svg>
                <span class="preflight">[Basic] (working)</span><svg class="ic s10"><use href="#chev"/></svg>
                <i class="green-dot"></i>
                <span class="errors">No errors</span><svg class="ic s10"><use href="#chev"/></svg>
                <svg class="ic s10 dim"><use href="#chev-l"/></svg>
                <div class="hscroll"><div class="hthumb"></div></div>
                <svg class="ic s10 dim"><use href="#chev-r"/></svg>
                <svg class="ic split" viewBox="0 0 16 12"><rect x=".7" y=".7" width="14.600" height="10.600" stroke-width="1.300"/><path d="M8 1v10" stroke-width="1.300"/></svg>
                <i class="resizer"></i>
            </div>

            <!-- floating tool panel -->
            <aside class="tools">
                <div class="tools-head"><svg class="ic s8"><use href="#dbl-r"/></svg><svg class="ic s8"><use href="#close"/></svg></div>
                <i class="tools-grip"></i>
                <span class="tool on"><svg class="ic s20"><use href="#t-sel"/></svg></span>
                <span class="tool"><svg class="ic s20"><use href="#t-dsel"/></svg></span>
                <span class="tool"><svg class="ic s20"><use href="#t-page"/></svg></span>
                <span class="tool"><svg class="ic s20"><use href="#t-gap"/></svg></span>
                <span class="tool more"><svg class="ic s20"><use href="#t-content"/></svg></span>
                <i class="tool-sep"></i>
                <span class="tool more"><svg class="ic s20"><use href="#t-type"/></svg></span>
                <span class="tool"><svg class="ic s20"><use href="#t-line"/></svg></span>
                <span class="tool more"><svg class="ic s20"><use href="#t-pen"/></svg></span>
                <span class="tool more"><svg class="ic s20"><use href="#t-pencil"/></svg></span>
                <span class="tool more"><svg class="ic s20"><use href="#t-frame"/></svg></span>
                <span class="tool more"><svg class="ic s20"><use href="#t-ellipse"/></svg></span>
                <i class="tool-sep"></i>
                <span class="tool"><svg class="ic s20"><use href="#t-scissors"/></svg></span>
                <span class="tool more"><svg class="ic s20"><use href="#t-free"/></svg></span>
                <span class="tool"><svg class="ic s20"><use href="#t-grad"/></svg></span>
                <span class="tool"><svg class="ic s20"><use href="#t-check"/></svg></span>
                <i class="tool-sep"></i>
                <span class="tool"><svg class="ic s20"><use href="#t-note"/></svg></span>
                <span class="tool more"><svg class="ic s20"><use href="#t-drop"/></svg></span>
                <span class="tool"><svg class="ic s20"><use href="#t-hand"/></svg></span>
                <span class="tool"><svg class="ic s20"><use href="#t-zoom"/></svg></span>
                <i class="tool-sep"></i>
                <div class="mini-swatch"><i class="ms-a"></i><svg class="ic s14"><use href="#swap"/></svg></div>
                <div class="fillstroke"><i class="fs-stroke"></i><i class="fs-fill"></i></div>
                <div class="apply-to"><span class="on"><i></i></span><svg class="ic s14 dim"><use href="#t-t"/></svg></div>
                <span class="tool on more apply"><i class="apply-none"></i></span>
                <span class="tool dimmed"><svg class="ic s20"><use href="#t-format"/></svg></span>
                <i class="tool-sep"></i>
                <span class="tool on more last"><svg class="ic s20"><use href="#t-screen"/></svg></span>
            </aside>

            <!-- pages panel lies over the canvas -->
            <aside class="pages-panel">
                <div class="tabs">
                    <div class="tab">Layers</div>
                    <div class="tab">Links</div>
                    <div class="tab active"><svg class="ic sort"><use href="#sort"/></svg>Pages</div>
                    <div class="tabs-end"><svg class="ic s10"><use href="#dbl-r"/></svg><i class="mini-sep"></i><svg class="ic menu-ic"><use href="#menu"/></svg></div>
                </div>
                <div class="parents">
                    <div class="parent-row"><span>[None]</span><i class="thumb"></i></div>
                    <div class="parent-row"><span>A-Parent</span><i class="thumb double"></i></div>
                    <div class="parent-row"><span class="picked">B-Parent</span><i class="thumb double"></i></div>
                </div>
                <div class="pages-list">
                    <div class="spread">
                        <i class="tri"></i>
                        <div class="page-thumb">A</div>
                        <span>1</span>
                    </div>
                </div>
                <div class="panel-foot">
                    <span>2 Parents</span>
                    <svg class="ic s18 edit" viewBox="0 0 18 18"><path d="M1 8h5l1-1V5h7v10H1zM6 15V8M8 3l3-1v3"/></svg>
                    <svg class="ic s14"><use href="#newpage"/></svg>
                    <svg class="ic s14"><use href="#trash"/></svg>
                </div>
                <i class="panel-grip"></i>
            </aside>
        </div>

        <div class="dock">
            <div class="dock-head"><svg class="ic s8"><use href="#dbl-l"/></svg></div>
            <div class="dock-icons">
                <i class="dock-grip"></i>
                <span class="dock-btn"><svg class="ic s22 light"><use href="#dock-layers"/></svg></span>
                <span class="dock-btn"><svg class="ic s22"><use href="#dock-links"/></svg></span>
                <span class="dock-btn on"><svg class="ic s22 light"><use href="#dock-pages"/></svg></span>
            </div>
        </div>

        <div class="panels">
            <div class="panels-head"><svg class="ic s8"><use href="#dbl-r"/></svg></div>

            <section class="panel info">
                <div class="tabs">
                    <div class="tab active"><svg class="ic sort"><use href="#sort"/></svg>Info</div>
                    <div class="tabs-end"><svg class="ic menu-ic"><use href="#menu"/></svg></div>
                </div>
                <div class="info-grid">
                    <div class="info-cell">
                        <svg class="ic s16 info-ic"><use href="#i-cross"/></svg>
                        <div class="info-lines"><div>X: 249 mm</div><div>Y: 77.25 mm</div><div>D:</div></div>
                    </div>
                    <div class="info-cell right">
                        <svg class="ic s16 info-ic"><use href="#i-box"/></svg>
                        <div class="info-lines"><div>W: 118 mm</div><div>&nbsp;H: 180 mm</div><div><svg class="ic s12"><use href="#c-angle"/></svg></div></div>
                    </div>
                    <div class="info-cell empty"></div>
                    <div class="info-cell empty right"></div>
                    <div class="info-cell swatches"><svg class="ic s14"><use href="#i-fill"/></svg></div>
                    <div class="info-cell swatches right"><svg class="ic s14"><use href="#i-stroke"/></svg></div>
                </div>
            </section>

            <section class="panel pathfinder">
                <div class="tabs">
                    <div class="tab">Align</div>
                    <div class="tab active wide">Pathfinder</div>
                </div>
                <div class="pf-group">
                    <h4>Paths:</h4>
                    <div class="pf-row"><svg class="ic s18"><use href="#p-join"/></svg><svg class="ic s18"><use href="#p-open"/></svg><svg class="ic s18"><use href="#p-close"/></svg><svg class="ic s18"><use href="#p-rev"/></svg></div>
                </div>
                <div class="pf-group">
                    <h4>Pathfinder:</h4>
                    <div class="pf-row"><svg class="ic s18"><use href="#f-add"/></svg><svg class="ic s18"><use href="#f-sub"/></svg><svg class="ic s18"><use href="#f-int"/></svg><svg class="ic s18"><use href="#f-exc"/></svg><svg class="ic s18"><use href="#f-back"/></svg></div>
                </div>
                <div class="pf-group">
                    <h4>Convert Shape:</h4>
                    <div class="pf-row"><svg class="ic s18"><use href="#s-rect"/></svg><svg class="ic s18"><use href="#s-round"/></svg><svg class="ic s18"><use href="#s-bevel"/></svg><svg class="ic s18"><use href="#s-inv"/></svg><svg class="ic s18"><use href="#s-ell"/></svg><svg class="ic s18"><use href="#s-tri"/></svg></div>
                    <div class="pf-row"><svg class="ic s18"><use href="#s-hex"/></svg><svg class="ic s18"><use href="#s-line"/></svg><svg class="ic s18"><use href="#s-plus"/></svg></div>
                </div>
                <div class="pf-group last">
                    <h4>Convert Point:</h4>
                    <div class="pf-row"><svg class="ic s18"><use href="#pt-a"/></svg><svg class="ic s18"><use href="#pt-b"/></svg><svg class="ic s18"><use href="#pt-c"/></svg><svg class="ic s18"><use href="#pt-d"/></svg></div>
                </div>
            </section>

            <section class="panel libraries">
                <div class="tabs">
                    <div class="tab">Properties</div>
                    <div class="tab active"><svg class="ic sort"><use href="#sort"/></svg>CC Libraries</div>
                    <div class="tabs-end"><svg class="ic menu-ic"><use href="#menu"/></svg></div>
                </div>
                <div class="lib-top">
                    <div class="lib-title"><svg class="ic s10"><use href="#chev-l"/></svg><span>TEST</span>
                        <svg class="ic s16 user" viewBox="0 0 16 16"><circle cx="7.500" cy="6.500" r="6" fill="currentColor" stroke="none"/><path d="M7.500 3.500a2.500 3 0 0 1 0 5 2.500 3 0 0 1 0-5zM2 12c1-1.500 3-2 5.500-2" stroke="#535353" stroke-width="1.300"/><path d="M13 11v4M11 13h4" stroke-width="1.200"/></svg>
                    </div>
                    <div class="lib-search"><svg class="ic s14"><use href="#t-zoom"/></svg><em>Search all libraries</em><svg class="ic s10"><use href="#chev"/></svg></div>
                    <div class="lib-tools">
                        <svg class="ic s14 funnel" viewBox="0 0 14 14"><path d="M1 1h12L8.500 7v6h-3V7z" fill="currentColor" stroke="none"/></svg>
                        <svg class="ic s16" viewBox="0 0 16 16"><path d="M1 3h9M1 8h7M1 13h4M13 2v12M11 12l2 2.500 2-2.500" stroke-width="1.500"/></svg>
                        <span class="lib-path">/...</span>
                        <svg class="ic s16" viewBox="0 0 16 16"><path d="M6 3h9M6 8h9M6 13h9" stroke-width="1.800"/><path d="M1 1h3.500v3.500H1zM1 6.300h3.500v3.500H1zM1 11.500h3.500V15H1z" fill="currentColor" stroke="none"/></svg>
                    </div>
                </div>
                <div class="lib-body">
                    <svg class="lib-art" viewBox="0 0 104 34">
                        <path d="M18 3c-2 3 3 5-1 7C8 11 0 14 1 21c1 8 12 11 23 9 7-2 13-8 12-17"/>
                        <ellipse cx="11" cy="19" rx="3.500" ry="3"/><ellipse cx="19" cy="22" rx="3" ry="3"/><ellipse cx="27" cy="20" rx="3" ry="3"/><ellipse cx="34" cy="16" rx="2.500" ry="2.500"/>
                        <path d="M24 9 30 3M24 9l6 5M25 9h42M62 2l3 3"/>
                        <circle cx="86" cy="13" r="16.500"/>
                        <path d="M86 4v18M76 13h20" class="plus"/>
                    </svg>
                </div>
                <div class="lib-foot">
                    <svg class="ic cloud" viewBox="0 0 16 10"><path d="M3 10a3 3 0 0 1 0-6 4.500 4.500 0 0 1 8-1 3.500 3.500 0 0 1 2 7z" fill="currentColor" stroke="none"/></svg>
                    <svg class="ic s16"><use href="#folder"/></svg>
                    <svg class="ic s14 plus-ic" viewBox="0 0 14 14"><path d="M6 1v10M1 6h10" stroke-width="1.800"/></svg>
                    <svg class="ic s14 dim"><use href="#trash"/></svg>
                </div>
            </section>

            <section class="panel styles">
                <div class="tabs">
                    <div class="tab cut">Charac</div>
                    <div class="tab active"><svg class="ic sort"><use href="#sort"/></svg>Paragraph Styles</div>
                    <div class="tab">Object</div>
                    <div class="tabs-end"><svg class="ic menu-ic"><use href="#menu"/></svg></div>
                </div>
                <div class="style-head"><span>(No Styles)</span><span class="aplus">[a+]</span><svg class="ic bolt-ic small dim"><use href="#bolt"/></svg></div>
                <div class="style-row">[Basic Paragraph]</div>
                <div class="style-space"></div>
                <div class="panel-foot">
                    <svg class="ic s14 dim" viewBox="0 0 14 14"><path d="M3 5V1h10v11H8M1 8h6v5H1zM8 3l3 0v3"/></svg>
                    <svg class="ic s16 pushed"><use href="#folder"/></svg>
                    <span class="pilcrow">¶×</span>
                    <svg class="ic s14"><use href="#newpage"/></svg>
                    <svg class="ic s14 dim"><use href="#trash"/></svg>
                </div>
            </section>
        </div>
    </div>

    <div class="taskbar"><i></i></div>
</body>
</html>
```
FILE: styles.css
```css
* {
    margin: 0;
    padding: 0;
    box-sizing: border-box;
}

html, body {
    width: 1919px;
    height: 1043px;
    overflow: hidden;
}

body {
    font-family: 'Roboto', 'Liberation Sans', sans-serif;
    font-size: 11px;
    color: #d6d6d6;
    background: #535353;
    display: flex;
    flex-direction: column;
}

.sprite {
    position: fixed;
    width: 0;
    height: 0;
}

/* shared icon sizes */
.ic {
    fill: none;
    stroke: currentColor;
    stroke-width: 1.1;
    color: #c4c4c4;
    flex: none;
}

.dim { color: #8e8e8e; }
.light { color: #e0e0e0; }
.s8 { width: 8px; height: 8px; }
.s10 { width: 10px; height: 10px; }
.s12 { width: 12px; height: 12px; }
.s14 { width: 14px; height: 14px; }
.s16 { width: 16px; height: 16px; }
.s18 { width: 18px; height: 18px; }
.s20 { width: 20px; height: 20px; }
.s22 { width: 24px; height: 24px; }
.s26 { width: 26px; height: 26px; }
.h18 { width: 12px; height: 18px; }
.w20 { width: 20px; height: 16px; }

/* menu bar */
.menubar {
    height: 36px;
    flex: none;
    display: flex;
    align-items: center;
    background: #535353;
    border-bottom: 1px solid #424242;
    padding-bottom: 1px;
    position: relative;
}

.app-logo {
    width: 14px;
    height: 15px;
    margin-left: 11px;
    background: #49021f;
    border-radius: 2px;
    color: #ff3366;
    font-size: 9px;
    font-weight: 700;
    line-height: 15px;
    text-align: center;
}

.home {
    width: 19px;
    height: 17px;
    margin-left: 18px;
    fill: #c8c8c8;
}

.menu {
    display: flex;
    gap: 17.300px;
    margin-left: 21px;
    font-size: 12px;
    color: #d2d2d2;
}

.share {
    margin-left: 966px;
    width: 54px;
    height: 20px;
    border: none;
    border-radius: 10px;
    background: #1473e6;
    color: #fff;
    font-family: inherit;
    font-size: 13px;
}

.vsep {
    width: 1px;
    height: 24px;
    background: #5e5e5e;
    margin: 0 7px 0 8px;
}

.workspace-name {
    display: flex;
    align-items: center;
    gap: 8px;
    font-size: 12px;
    width: 78px;
    padding-left: 5px;
}

.workspace-name + .vsep {
    margin-right: 9px;
}

.stock {
    width: 129px;
    height: 20px;
    border: 1px solid #707070;
    border-radius: 3px;
    display: flex;
    align-items: center;
    gap: 5px;
    padding-left: 3px;
    color: #858585;
}

.stock-ic {
    width: 18px;
    height: 14px;
    fill: none;
    stroke: #3f8be0;
    stroke-width: 1.300;
}

.winctl {
    position: absolute;
    top: 0;
    right: 0;
    width: 104px;
    height: 22px;
    border: 1px solid #666;
    border-top: none;
    border-right: none;
    border-radius: 0 0 0 4px;
    display: flex;
}

.winctl span {
    width: 28px;
    display: flex;
    justify-content: center;
    align-items: center;
    border-right: 1px solid #666;
}

.winctl span:last-child {
    flex: 1;
    border-right: none;
}

/* control bar: one grid, row 1 then row 2, tall items span both */
.controlbar {
    height: 60px;
    flex: none;
    background: #505050;
    border-bottom: 1px solid #424242;
    padding-top: 6px;
    display: grid;
    grid-template-columns:
        13px 47px 18px 95px 18px 92px 24px 11px 22px 90px 26px 25px 90px 6px 28px 28px 34px 6px 28px 28px
        6px 27px 20px 8px 90px 6px 23px 36px 36px 6px 31px 24px 6px 25px 90px 7px 22px 93px 6px 22px
        12px 23px 30px 6px 29px 6px 28px 28px 28px 33px 6px 30px 193px 6px 118px 6px 24px;
    grid-template-rows: 21px 21px;
    row-gap: 5px;
    justify-items: center;
    align-items: center;
}

.controlbar .span2 {
    grid-row: span 2;
}

.controlbar label {
    color: #c8c8c8;
    font-size: 10.500px;
    font-weight: 500;
}

.grip-v {
    width: 4px;
    height: 22px;
    background: repeating-linear-gradient(#6e6e6e 0 1px, transparent 1px 3px);
}

.sep {
    width: 1px;
    height: 48px;
    background: #5c5c5c;
}

.field {
    justify-self: start;
    width: 87px;
    height: 21px;
    display: flex;
    align-items: center;
    border: 1px solid #6b6b6b;
    border-radius: 4px;
    font-size: 11px;
    color: #d8d8d8;
    overflow: hidden;
}

.spin {
    width: 17px;
    height: 100%;
    flex: none;
    display: flex;
    flex-direction: column;
    align-items: center;
    justify-content: center;
    border-right: 1px solid #6b6b6b;
}

.spin .ic {
    width: 12px;
    height: 9px;
}

.val {
    flex: 1;
    padding-left: 4px;
    white-space: nowrap;
}

.drop {
    width: 18px;
    height: 100%;
    flex: none;
    display: flex;
    justify-content: center;
    align-items: center;
    border-left: 1px solid #6b6b6b;
}

.dark-btn {
    width: 22px;
    height: 22px;
    background: #2f2f2f;
    border-radius: 3px;
    display: flex;
    justify-content: center;
    align-items: center;
}

.p-box {
    width: 24px;
    height: 24px;
    font-family: 'Liberation Serif', serif;
    font-size: 16px;
    font-weight: 700;
    line-height: 24px;
    text-align: center;
    color: #e4e4e4;
    background:
        linear-gradient(#ddd, #ddd) 0 0 / 4px 1px no-repeat,
        linear-gradient(#ddd, #ddd) 100% 0 / 4px 1px no-repeat,
        linear-gradient(#ddd, #ddd) 100% 0 / 1px 4px no-repeat,
        linear-gradient(#ddd, #ddd) 0 100% / 4px 1px no-repeat,
        linear-gradient(#ddd, #ddd) 100% 100% / 4px 1px no-repeat,
        linear-gradient(#ddd, #ddd) 100% 100% / 1px 4px no-repeat;
}

.swatch {
    width: 19px;
    height: 20px;
    background: #fff;
    position: relative;
    overflow: hidden;
}

.swatch::after {
    content: "";
    position: absolute;
    left: -4px;
    top: 9px;
    width: 28px;
    height: 2px;
    background: #d01c1c;
    transform: rotate(-48deg);
}

.swatch.stroke {
    box-shadow: inset 0 0 0 4px #fff, inset 0 0 0 20px #444;
}

.arrow-btn {
    justify-self: start;
    width: 17px;
    height: 20px;
    border: 1px solid #6b6b6b;
    border-radius: 4px;
    display: flex;
    justify-content: center;
    align-items: center;
}

.fx {
    font-family: 'Liberation Serif', serif;
    font-style: italic;
    font-size: 15px;
    color: #8e8e8e;
}

.stroke-preview {
    flex: 1;
    height: 100%;
    background: #e6e6e6;
    display: flex;
    align-items: center;
    padding: 0 4px;
}

.stroke-preview i {
    width: 100%;
    height: 10px;
    background: #000;
}

.frame-preview {
    flex: 1;
    height: 100%;
    background: #e6e6e6;
    padding: 2px;
}

.frame-preview i {
    display: block;
    height: 100%;
    border-top: 2px solid #4c4c4c;
    border-right: 1px solid #222;
}

.span-col2 {
    grid-column: span 2;
}

.opacity-field {
    width: 70px;
}

.style-field {
    width: 181px;
    margin-left: 8px;
}

.white-val {
    flex: 1;
    height: 100%;
    background: #e8e8e8;
    color: #111;
    padding-left: 7px;
    line-height: 19px;
    white-space: nowrap;
}

.style-actions {
    justify-self: end;
    margin-right: 6px;
    display: flex;
    gap: 12px;
}

.bolt-ic {
    width: 14px;
    height: 20px;
    justify-self: end;
    margin-right: 5px;
}

/* workspace */
.workspace {
    flex: 1;
    display: flex;
    min-height: 0;
}

.doc {
    width: 1627px;
    flex: none;
    display: flex;
    flex-direction: column;
    position: relative;
    background: #444;
}

.doc-tabs {
    height: 29px;
    flex: none;
    display: flex;
    background: #434343;
}

.doc-tab {
    width: 270px;
    display: flex;
    align-items: center;
    justify-content: flex-end;
    gap: 9px;
    padding-right: 16px;
    font-size: 12px;
    color: #a8a8a8;
    white-space: nowrap;
}

.doc-tab.active {
    width: 147px;
    padding-right: 15px;
    background: #535353;
    color: #f0f0f0;
    font-weight: 500;
}

.ruler-h {
    height: 15px;
    flex: none;
    display: flex;
    padding-left: 63px;
    background-color: #1e1e1e;
    background-image:
        repeating-linear-gradient(90deg, #aaa 0 1px, transparent 1px 41.400px),
        repeating-linear-gradient(90deg, #999 0 1px, transparent 1px 8.280px);
    background-position: 84px 100%, 63px 100%;
    background-size: 100% 6px, 100% 3px;
    background-repeat: no-repeat;
}

.ruler-h span {
    width: 41.400px;
    flex: none;
    border-left: 1px solid #bbb;
    padding-left: 2px;
    font-size: 10.500px;
    line-height: 12px;
    color: #d8d8d8;
}

.doc-body {
    flex: 1;
    display: flex;
    min-height: 0;
}

.ruler-v {
    width: 16px;
    flex: none;
    padding-top: 9px;
    background-color: #1e1e1e;
    background-image: repeating-linear-gradient(#999 0 1px, transparent 1px 8.280px);
    background-size: 3px 100%;
    background-position: 100% 9px;
    background-repeat: no-repeat;
    overflow: hidden;
}

.ruler-v span {
    display: block;
    height: 41.400px;
    width: 8px;
    margin-left: 2px;
    font-size: 9.500px;
    line-height: 9px;
    word-break: break-all;
    color: #d8d8d8;
    padding-top: 1px;
}

.canvas {
    flex: 1;
    background: #5e5e5e;
    position: relative;
    overflow: hidden;
}

/* the sheet is a free canvas: everything on it sits at document coordinates */
.sheet {
    position: absolute;
    left: 48px;
    top: 8px;
    width: 1224px;
    height: 868px;
    background: #fff;
    box-shadow: 3px 2px 0 #000;
}

.spine {
    position: absolute;
    left: 612px;
    top: 0;
    width: 1px;
    height: 100%;
    background: #333;
}

.parent-box, .text-frame {
    position: absolute;
    top: 61px;
    width: 489px;
    height: 745px;
    border: 1px solid #b65ac9;
}

.parent-box {
    left: 61px;
    border-right-color: #8a5cc0;
}

.text-frame {
    left: 674px;
    border-color: #5b9bd5;
}

.guide {
    position: absolute;
    top: 0;
    width: 1px;
    height: 100%;
    background: #b8cfe6;
}

.text-frame .guide {
    background: #7fb3d5;
}

.g1 { left: 234px; }
.g2 { left: 252px; }

.thread {
    position: absolute;
    inset: 0;
    width: 100%;
    height: 100%;
    pointer-events: none;
}

.thread path {
    fill: none;
    stroke: #a9c8f2;
    stroke-width: 3;
}

.h {
    position: absolute;
    width: 7px;
    height: 7px;
    margin: -3px 0 0 -3px;
    background: #fff;
    border: 1px solid #5b9bd5;
}

.tl { left: 674px; top: 61px; }
.tc { left: 918px; top: 61px; }
.tr { left: 1162px; top: 61px; }
.ml { left: 674px; top: 434px; }
.mr { left: 1162px; top: 434px; }
.bl { left: 674px; top: 806px; }
.bc { left: 918px; top: 806px; }
.br { left: 1162px; top: 806px; }

.port {
    position: absolute;
    width: 10px;
    height: 10px;
    margin: -5px 0 0 -5px;
    background: #fff;
    border: 1px solid #5b9bd5;
}

.port.out { left: 550px; top: 84px; }
.port.in { left: 675px; top: 784px; }

.port.yellow {
    left: 1163px;
    top: 84px;
    width: 8px;
    height: 9px;
    margin: -4px 0 0 -4px;
    background: #f0e02a;
    border-color: #9aa04a;
}

.port.out::after, .port.in::after {
    content: "";
    position: absolute;
    left: 2px;
    top: 2px;
    width: 4px;
    height: 4px;
    background: #5b9bd5;
    clip-path: polygon(100% 0, 100% 100%, 0 50%);
}

.load-cursor {
    position: absolute;
    left: 669px;
    top: 98px;
    width: 11px;
    height: 16px;
    background: repeating-linear-gradient(#555 0 1px, #fff 1px 3px);
    border: 1px solid #555;
}

.vscroll {
    width: 16px;
    flex: none;
    background: #4e4e4e;
    border-right: 2px solid #3a3a3a;
    display: flex;
    flex-direction: column;
    align-items: center;
    padding-top: 475px;
    padding-bottom: 3px;
    justify-content: space-between;
}

.vthumb {
    width: 100%;
    height: 292px;
    background: #666;
    border-radius: 0 0 6px 6px;
}

.statusbar {
    height: 16px;
    flex: none;
    display: flex;
    align-items: center;
    background: #444;
    border-top: 1px solid #4f4f4f;
    font-size: 10.500px;
    position: relative;
}

.zoom {
    margin: 0 9px 0 15px;
    width: 32px;
}

.nav {
    margin-left: 11px;
    color: #6f6f6f;
}

.nav2 {
    margin-left: 11px;
    color: #a8a8a8;
}

.page-select {
    width: 90px;
    height: 16px;
    margin-left: 10px;
    display: flex;
    align-items: center;
    border: 1px solid #6b6b6b;
    border-radius: 3px;
    padding-left: 3px;
}

.page-select span:first-child {
    flex: 1;
}

.timer {
    margin: 0 21px 0 15px;
}

.preflight {
    width: 101px;
}

.green-dot {
    width: 10px;
    height: 10px;
    margin: 0 7px 0 15px;
    border-radius: 50%;
    background: #1e9a1e;
}

.errors {
    width: 62px;
}

.errors + .ic + .ic {
    margin-left: 6px;
}

.hscroll {
    width: 1041px;
    height: 14px;
    margin-left: 3px;
    flex: none;
    padding-left: 239px;
}

.hthumb {
    width: 674px;
    height: 14px;
    background: #666;
    border-radius: 0 7px 7px 0;
}

.split {
    width: 16px;
    height: 12px;
    margin-left: 7px;
    color: #d0d0d0;
}

.resizer {
    width: 10px;
    height: 10px;
    margin-left: 5px;
    background: radial-gradient(#888 .6px, transparent 1px) 0 0 / 3px 3px;
    clip-path: polygon(100% 0, 100% 100%, 0 100%);
}

/* tool panel */
.tools {
    position: absolute;
    left: 1px;
    top: 0;
    width: 39px;
    height: 654px;
    background: #535353;
    border: 1px solid #474747;
    box-shadow: 1px 1px 2px rgba(0, 0, 0, 0.4);
    display: flex;
    flex-direction: column;
    align-items: center;
    z-index: 3;
}

.tools-head {
    width: 100%;
    height: 12px;
    flex: none;
    background: #444;
    display: flex;
    justify-content: space-between;
    align-items: center;
    padding: 0 4px;
    margin-bottom: 4px;
}

.tools-grip {
    width: 21px;
    height: 4px;
    flex: none;
    margin-bottom: 5px;
    background: repeating-linear-gradient(90deg, #777 0 1px, transparent 1px 2px);
}

.tool {
    width: 28px;
    height: 24px;
    flex: none;
    display: flex;
    justify-content: center;
    align-items: center;
    border-radius: 4px;
    position: relative;
}

.tool.on {
    background: #2f2f2f;
}

.tool.more::after {
    content: "";
    position: absolute;
    right: 1px;
    bottom: 2px;
    width: 4px;
    height: 4px;
    background: #c4c4c4;
    clip-path: polygon(100% 0, 100% 100%, 0 100%);
}

.tool-sep {
    width: 100%;
    height: 1px;
    flex: none;
    margin: 1px 0;
    background: #474747;
}

.mini-swatch {
    width: 28px;
    height: 15px;
    display: flex;
    justify-content: space-between;
    align-items: center;
    flex: none;
}

.ms-a {
    width: 11px;
    height: 11px;
    background: #fff;
    border: 1px solid #000;
    box-shadow: inset 0 0 0 2px #fff, inset 0 0 0 6px #e07070;
}

.fillstroke {
    width: 28px;
    height: 36px;
    margin-top: 3px;
    flex: none;
    position: relative;
}

.fs-fill, .fs-stroke {
    position: absolute;
    background: #fff;
    overflow: hidden;
}

.fs-fill {
    left: 0;
    top: 0;
    width: 19px;
    height: 20px;
}

.fs-stroke {
    left: 9px;
    top: 10px;
    width: 19px;
    height: 20px;
    box-shadow: inset 0 0 0 4px #fff, inset 0 0 0 20px #555;
}

.fs-fill::after, .fs-stroke::after, .apply-none::after {
    content: "";
    position: absolute;
    left: -4px;
    top: 9px;
    width: 28px;
    height: 2px;
    background: #d01c1c;
    transform: rotate(-46deg);
}

.apply-to {
    width: 28px;
    height: 14px;
    flex: none;
    display: flex;
    justify-content: space-between;
    align-items: center;
    margin-bottom: 5px;
}

.apply-to .on {
    width: 14px;
    height: 14px;
    border-radius: 3px;
    background: #2f2f2f;
    display: flex;
    justify-content: center;
    align-items: center;
}

.apply-to i {
    width: 9px;
    height: 8px;
    border: 1px solid #ccc;
}

.apply {
    height: 22px;
}

.apply-none {
    width: 16px;
    height: 14px;
    background: #fff;
    position: relative;
    overflow: hidden;
}

.apply-none::after {
    left: -4px;
    top: 6px;
    width: 24px;
    transform: rotate(-40deg);
}

.dimmed {
    height: 32px;
    opacity: 0.7;
}

.last {
    height: 22px;
}

/* pages panel */
.pages-panel {
    position: absolute;
    left: 1373px;
    top: 9px;
    width: 253px;
    height: 512px;
    background: #535353;
    border-top: 3px solid #3d3d3d;
    border-left: 1px solid #484848;
    display: flex;
    flex-direction: column;
    z-index: 2;
}

.tabs {
    height: 27px;
    flex: none;
    display: flex;
    align-items: stretch;
    background: #444;
}

.tab {
    display: flex;
    align-items: center;
    padding: 0 13px;
    font-size: 11px;
    font-weight: 500;
    color: #9e9e9e;
    border-right: 1px solid #3e3e3e;
    white-space: nowrap;
}

.tab.active {
    background: #535353;
    color: #ececec;
    border-right: 1px solid #3e3e3e;
    padding: 0 12px 0 8px;
}

.sort {
    width: 7px;
    height: 11px;
    margin-right: 5px;
}

.tabs-end {
    margin-left: auto;
    display: flex;
    align-items: center;
    gap: 6px;
    padding-right: 4px;
}

.mini-sep {
    width: 1px;
    height: 12px;
    background: #888;
}

.menu-ic {
    width: 14px;
    height: 10px;
}

.parents {
    height: 270px;
    flex: none;
    padding: 1px 23px 0 2px;
}

.parent-row {
    height: 29px;
    display: flex;
    align-items: center;
    justify-content: space-between;
    font-size: 10.500px;
}

.picked {
    background: #2f80d8;
    color: #fff;
    font-weight: 500;
    padding: 1px 6px 1px 1px;
    line-height: 13px;
}

.thumb {
    width: 17px;
    height: 23px;
    background: #fff;
    border: 1px solid #8c8c8c;
}

.thumb.double {
    width: 34px;
    background:
        linear-gradient(#777, #777) 50% 0 / 1px 100% no-repeat,
        repeating-linear-gradient(#8aa 0 1px, #fff 1px 3px) 45% 0 / 1px 100% no-repeat,
        repeating-linear-gradient(#8aa 0 1px, #fff 1px 3px) 95% 0 / 1px 100% no-repeat,
        #fff;
}

.pages-list {
    flex: 1;
    border-top: 3px solid #5e5e5e;
    padding: 4px 0 0 93px;
}

.spread {
    width: 27px;
    display: flex;
    flex-direction: column;
    align-items: center;
    font-size: 10px;
}

.tri {
    width: 0;
    height: 0;
    border-left: 6px solid transparent;
    border-right: 6px solid transparent;
    border-top: 5px solid #b0b0b0;
    margin-bottom: 1px;
    margin-right: 2px;
}

.page-thumb {
    width: 25px;
    height: 35px;
    background: #fff;
    border: 1px dotted #567;
    border-right: 2px solid #d0d0d0;
    color: #222;
    font-size: 9px;
    font-weight: 700;
    padding-left: 2px;
    line-height: 12px;
    margin-bottom: 8px;
    margin-right: 2px;
    box-shadow: 1px 0 0 #d0d0d0;
}

.spread span {
    margin-right: 4px;
}

.panel-foot {
    height: 25px;
    flex: none;
    display: flex;
    align-items: center;
    gap: 14px;
    padding: 0 23px 0 5px;
    border-top: 1px solid #4a4a4a;
    font-size: 10.500px;
}

.panel-foot > span:first-child {
    margin-right: auto;
}

.panel-grip {
    height: 9px;
    flex: none;
    background: #424242 repeating-linear-gradient(90deg, #777 0 1px, transparent 1px 2px) 50% 50% / 18px 4px no-repeat;
    border-top: 1px solid #3a3a3a;
}

/* dock */
.dock {
    width: 40px;
    flex: none;
    background: #535353;
    border-right: 3px solid #3e3e3e;
}

.dock-head, .panels-head {
    height: 12px;
    background: #444;
    display: flex;
    align-items: center;
    justify-content: flex-end;
    padding-right: 5px;
}

.dock-icons {
    height: 97px;
    border-bottom: 1px solid #424242;
    display: flex;
    flex-direction: column;
    align-items: center;
    padding-top: 3px;
    background: #535353;
}

.dock-grip {
    width: 19px;
    height: 4px;
    margin-bottom: 5px;
    flex: none;
    background: repeating-linear-gradient(90deg, #777 0 1px, transparent 1px 2px);
}

.dock-btn {
    width: 27px;
    height: 23px;
    margin-bottom: 4.500px;
    flex: none;
    display: flex;
    justify-content: center;
    align-items: center;
    border-radius: 3px;
}

.dock-btn.on {
    background: #2f2f2f;
}

/* right hand panels */
.panels {
    flex: 1;
    min-width: 0;
    display: flex;
    flex-direction: column;
    background: #3e3e3e;
}

.panel {
    background: #535353;
    display: flex;
    flex-direction: column;
    flex: none;
}

.info { height: 195px; margin-bottom: 3px; }
.pathfinder { height: 311px; margin-bottom: 2px; }
.libraries { height: 231px; margin-bottom: 3px; }
.styles { height: 186px; }

.info-grid {
    flex: 1;
    display: grid;
    grid-template-columns: 120px 132px;
    grid-template-rows: 57px 40px 71px;
    font-size: 10.500px;
}

.info-cell {
    display: flex;
    align-items: center;
    border-bottom: 1px solid #4a4a4a;
    padding-left: 8px;
    gap: 11px;
}

.info-cell.right {
    border-left: 1px solid #4a4a4a;
    margin-right: 18px;
    padding-left: 9px;
    gap: 11px;
}

.info-cell.swatches {
    border-bottom: none;
    gap: 0;
}

.info-lines {
    line-height: 15px;
}

.info-lines .ic {
    display: block;
    margin-top: 1px;
    color: #b0b0b0;
}

.pathfinder .tab {
    padding: 0 14px;
    min-width: 53px;
    justify-content: center;
}

.pathfinder .tab.wide {
    padding: 0 14px;
    font-weight: 700;
}

.pf-group {
    margin: 0 18px 0 5px;
    padding-top: 9px;
    border-bottom: 1px solid #4a4a4a;
}

.pf-group + .pf-group {
    padding-top: 8px;
}

.pf-group.last {
    border-bottom: none;
    padding-top: 9px;
}

.pf-group h4 {
    font-size: 10.500px;
    font-weight: 400;
    line-height: 16px;
    color: #d6d6d6;
}

.pf-row {
    display: flex;
    gap: 18px;
    padding-left: 4px;
    height: 38px;
    align-items: center;
}

.pf-row + .pf-row {
    height: 26px;
    margin-bottom: 5px;
}

.libraries .tab:first-child {
    width: 78px;
    padding: 0 12px;
}

.lib-top {
    height: 113px;
    flex: none;
    padding: 0 12px;
}

.lib-title {
    height: 42px;
    display: flex;
    align-items: center;
    gap: 4px;
    font-size: 10px;
    letter-spacing: .5px;
    margin-left: -3px;
    margin-right: 3px;
}

.user {
    margin-left: auto;
}

.lib-search {
    height: 30px;
    display: flex;
    align-items: center;
    gap: 7px;
    padding-right: 6px;
    border-bottom: 1px solid #6b6b6b;
    margin-bottom: 9px;
}

.lib-search em {
    flex: 1;
    font-size: 10.500px;
    color: #7d7d7d;
}

.lib-tools {
    display: flex;
    align-items: center;
    gap: 11px;
    padding: 3px 5px 0 6px;
}

.funnel {
    color: #8e8e8e;
}

.lib-path {
    margin-left: auto;
    font-size: 11px;
    font-style: italic;
    color: #c4c4c4;
    margin-right: 2px;
}

.lib-body {
    flex: 1;
    background: #505050;
    overflow: hidden;
    padding-left: 71px;
}

.lib-art {
    width: 104px;
    height: 34px;
    fill: none;
    stroke: #bdbdbd;
    stroke-width: 1.400;
    display: block;
}

.lib-art .plus {
    stroke: #2f80d8;
    stroke-width: 1.800;
}

.lib-foot {
    height: 23px;
    flex: none;
    display: flex;
    align-items: center;
    padding: 0 19px 0 16px;
    gap: 8px;
    border-top: 1px solid #4a4a4a;
}

.cloud {
    width: 16px;
    height: 10px;
    margin-right: auto;
}

.plus-ic {
    color: #e0e0e0;
}

.cut {
    width: 47px;
    padding: 0 0 0 12px !important;
    overflow: hidden;
}

.styles .tab:nth-child(3) {
    width: 49px;
    padding: 0 12px;
}

.style-head {
    height: 25px;
    flex: none;
    display: flex;
    align-items: center;
    padding: 0 12px 0 5px;
    border-bottom: 1px solid #4a4a4a;
    font-size: 10.500px;
}

.style-head span:first-child {
    flex: 1;
}

.aplus {
    font-size: 13px;
    color: #a8a8a8;
    margin-right: 11px;
}

.bolt-ic.small {
    width: 11px;
    height: 15px;
    margin-right: 0;
}

.style-row {
    height: 21px;
    flex: none;
    border-bottom: 1px solid #4a4a4a;
    padding-left: 35px;
    line-height: 20px;
    font-size: 10.500px;
}

.style-space {
    flex: 1;
}

.styles .panel-foot {
    padding: 0 17px 0 7px;
}

.pushed {
    margin-left: auto;
}

.pilcrow {
    color: #7a7a7a;
    font-size: 13px;
}

/* bottom edge: a sliver of the OS taskbar */
.taskbar {
    height: 4px;
    flex: none;
    background: #1c2b3a;
}

.taskbar i {
    display: block;
    margin-left: 48px;
    width: 287px;
    height: 3px;
    background: #dcdcdc;
}
```
